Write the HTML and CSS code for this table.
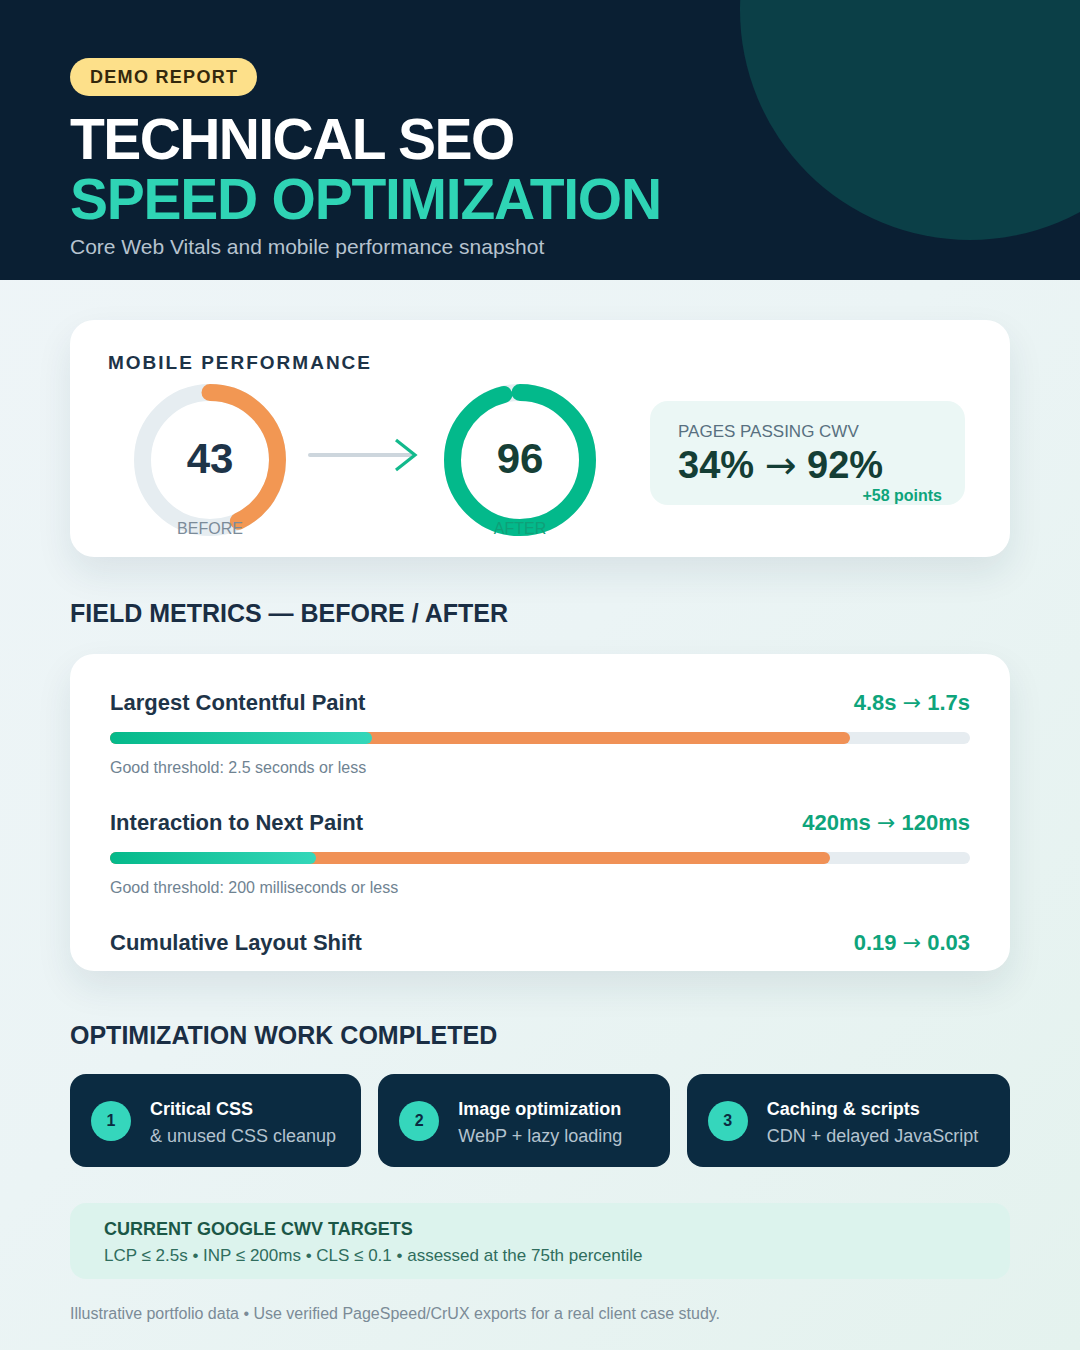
FILE: index.html
```html
<!DOCTYPE html>
<html lang="en">
<head>
<meta charset="utf-8">
<title>Technical SEO Speed Optimization</title>
<link rel="stylesheet" href="styles.css">
</head>
<body>
<div class="page">
  <header class="hero">
    <div class="hero-circle"></div>
    <span class="badge">DEMO REPORT</span>
    <h1 class="title"><span class="t-white">TECHNICAL SEO</span><span class="t-green">SPEED OPTIMIZATION</span></h1>
    <p class="subtitle">Core Web Vitals and mobile performance snapshot</p>
  </header>

  <main class="content">
    <section class="card perf">
      <h2 class="perf-heading">MOBILE PERFORMANCE</h2>
      <div class="perf-row">
        <div class="donut">
          <svg width="152" height="152" viewBox="0 0 152 152">
            <circle cx="76" cy="76" r="67.5" fill="none" stroke="#e6edf1" stroke-width="17"/>
            <circle cx="76" cy="76" r="67.5" fill="none" stroke="#f29753" stroke-width="17" stroke-linecap="round" stroke-dasharray="182.4 424.1" transform="rotate(-90 76 76)"/>
          </svg>
          <span class="donut-num before-num">43</span>
          <span class="donut-label before-label">BEFORE</span>
        </div>
        <div class="arrow">
          <svg width="110" height="40" viewBox="0 0 110 40">
            <line x1="2" y1="20" x2="104" y2="20" stroke="#cdd6dd" stroke-width="4" stroke-linecap="round"/>
            <polyline points="88,5 107,20 88,35" fill="none" stroke="#12b98c" stroke-width="3.2"/>
          </svg>
        </div>
        <div class="donut">
          <svg width="152" height="152" viewBox="0 0 152 152">
            <circle cx="76" cy="76" r="67.5" fill="none" stroke="#e6edf1" stroke-width="17"/>
            <circle cx="76" cy="76" r="67.5" fill="none" stroke="#03b98b" stroke-width="17" stroke-linecap="round" stroke-dasharray="407.1 424.1" transform="rotate(-90 76 76)"/>
          </svg>
          <span class="donut-num after-num">96</span>
          <span class="donut-label after-label">AFTER</span>
        </div>
        <div class="stat">
          <div class="stat-label">PAGES PASSING CWV</div>
          <div class="stat-value">34% <span class="arr">→</span> 92%</div>
          <div class="stat-delta">+58 points</div>
        </div>
      </div>
    </section>

    <h2 class="section-heading field-heading">FIELD METRICS — BEFORE / AFTER</h2>
    <section class="card metrics">
      <div class="metric">
        <div class="metric-head"><span class="metric-name">Largest Contentful Paint</span><span class="metric-val">4.8s <span class="arr">→</span> 1.7s</span></div>
        <div class="bar">
          <div class="bar-before" style="width:86%"></div>
          <div class="bar-after" style="width:30.5%"></div>
        </div>
        <div class="metric-note">Good threshold: 2.5 seconds or less</div>
      </div>
      <div class="metric">
        <div class="metric-head"><span class="metric-name">Interaction to Next Paint</span><span class="metric-val">420ms <span class="arr">→</span> 120ms</span></div>
        <div class="bar">
          <div class="bar-before" style="width:83.7%"></div>
          <div class="bar-after" style="width:24%"></div>
        </div>
        <div class="metric-note">Good threshold: 200 milliseconds or less</div>
      </div>
      <div class="metric">
        <div class="metric-head"><span class="metric-name">Cumulative Layout Shift</span><span class="metric-val">0.19 <span class="arr">→</span> 0.03</span></div>
      </div>
    </section>

    <h2 class="section-heading work-heading">OPTIMIZATION WORK COMPLETED</h2>
    <section class="steps">
      <div class="step">
        <span class="step-num">1</span>
        <div class="step-text"><div class="step-title">Critical CSS</div><div class="step-sub">&amp; unused CSS cleanup</div></div>
      </div>
      <div class="step">
        <span class="step-num">2</span>
        <div class="step-text"><div class="step-title">Image optimization</div><div class="step-sub">WebP + lazy loading</div></div>
      </div>
      <div class="step">
        <span class="step-num">3</span>
        <div class="step-text"><div class="step-title">Caching &amp; scripts</div><div class="step-sub">CDN + delayed JavaScript</div></div>
      </div>
    </section>

    <section class="targets">
      <div class="targets-title">CURRENT GOOGLE CWV TARGETS</div>
      <div class="targets-text">LCP ≤ 2.5s • INP ≤ 200ms • CLS ≤ 0.1 • assessed at the 75th percentile</div>
    </section>

    <p class="footnote">Illustrative portfolio data • Use verified PageSpeed/CrUX exports for a real client case study.</p>
  </main>
</div>
</body>
</html>
```
FILE: styles.css
```css
* { box-sizing: border-box; }
html, body { margin: 0; padding: 0; }
body {
  font-family: "Liberation Sans", Arial, Helvetica, sans-serif;
  background: #eef4f6;
}
.page {
  width: 1080px;
  height: 1350px;
  overflow: hidden;
  background: linear-gradient(135deg, #eff5f8 0%, #ebf4f5 50%, #e4f2ee 100%);
}
.arr {
  font-family: "DejaVu Sans", sans-serif;
  font-weight: 400;
}

/* HERO */
.hero {
  position: relative;
  overflow: hidden;
  background: #0a1f33;
  padding: 58px 70px 21px;
}
.hero-circle {
  position: absolute;
  left: 740px;
  top: -220px;
  width: 460px;
  height: 460px;
  border-radius: 50%;
  background: #0b3f47;
}
.badge {
  position: relative;
  display: inline-block;
  background: #fde08a;
  color: #33280c;
  font-size: 18px;
  font-weight: 700;
  letter-spacing: 1.3px;
  line-height: 20px;
  padding: 9px 19px 9px 20px;
  border-radius: 19px;
}
.title {
  position: relative;
  margin: 13px 0 0;
  font-size: 57px;
  line-height: 60px;
  font-weight: 700;
}
.title span { display: block; }
.t-white { color: #ffffff; letter-spacing: -1.6px; }
.t-green { color: #2fd4b5; letter-spacing: -1.25px; }
.subtitle {
  position: relative;
  margin: 6px 0 0;
  font-size: 21px;
  line-height: 24px;
  color: #b6c3cf;
}

/* CONTENT */
.content {
  padding: 40px 70px 0;
}
.card {
  background: #ffffff;
  border-radius: 24px;
  box-shadow: 0 16px 36px rgba(20, 60, 80, 0.09);
}

.perf {
  height: 237px;
  padding: 31px 38px 21px;
}
.perf-heading {
  margin: 0;
  font-size: 19px;
  line-height: 24px;
  font-weight: 700;
  letter-spacing: 2px;
  color: #1d3347;
}
.perf-row {
  display: flex;
  align-items: center;
  margin-top: 9px;
}
.donut {
  position: relative;
  width: 204px;
  height: 152px;
  display: flex;
  justify-content: center;
}
.donut-num {
  position: absolute;
  left: 0;
  right: 0;
  top: 52px;
  text-align: center;
  font-size: 42px;
  line-height: 46px;
  font-weight: 700;
}
.before-num { color: #1e3448; }
.after-num { color: #163f36; }
.donut-label {
  position: absolute;
  left: 0;
  right: 0;
  top: 136px;
  text-align: center;
  font-size: 16px;
  line-height: 18px;
}
.before-label { color: #7b8b99; }
.after-label { color: #0f9f78; }
.arrow {
  width: 110px;
  height: 40px;
  margin-left: -4px;
  margin-bottom: 10px;
}
.arrow svg { display: block; }
.stat {
  width: 315px;
  margin-left: 28px;
  margin-bottom: 14px;
  background: #ebf7f5;
  border-radius: 18px;
  padding: 22px 23px 0 28px;
  height: 104px;
}
.stat-label {
  font-size: 17px;
  line-height: 18px;
  color: #587080;
}
.stat-value {
  margin-top: 2px;
  font-size: 38px;
  line-height: 44px;
  font-weight: 700;
  color: #143e35;
}
.stat-delta {
  text-align: right;
  font-size: 16px;
  line-height: 18px;
  font-weight: 700;
  color: #0ea47b;
}

.section-heading {
  margin: 0;
  font-size: 25px;
  line-height: 30px;
  font-weight: 700;
  color: #1a2e44;
}
.field-heading { margin: 41px 0 26px; }
.work-heading { margin: 49px 0 24px; }

/* METRICS */
.metrics {
  height: 317px;
  padding: 37px 40px 14px;
}
.metric + .metric { margin-top: 34px; }
.metric-head {
  display: flex;
  justify-content: space-between;
  align-items: baseline;
  font-size: 22px;
  line-height: 24px;
  font-weight: 700;
}
.metric-name { color: #1e3448; }
.metric-val { color: #0ea47b; }
.bar {
  position: relative;
  margin-top: 17px;
  height: 12px;
  border-radius: 6px;
  background: #e6ecf0;
}
.bar-before, .bar-after {
  position: absolute;
  left: 0;
  top: 0;
  height: 12px;
  border-radius: 6px;
}
.bar-before { background: #f09156; }
.bar-after { background: linear-gradient(90deg, #05b98a 0%, #34d7ba 100%); }
.metric-note {
  margin-top: 15px;
  font-size: 16px;
  line-height: 18px;
  color: #6f8392;
}

/* STEPS */
.steps {
  display: grid;
  grid-template-columns: 291fr 291fr 323fr;
  gap: 17px;
}
.step {
  height: 93px;
  background: #0b2b41;
  border-radius: 16px;
  padding: 4px 16px 0 21px;
  display: flex;
  align-items: center;
  gap: 19px;
}
.step-num {
  flex: none;
  width: 40px;
  height: 40px;
  margin-top: -4px;
  border-radius: 50%;
  background: #35d6bc;
  color: #0b2b41;
  font-size: 16px;
  font-weight: 700;
  display: flex;
  align-items: center;
  justify-content: center;
}
.step-title {
  font-size: 18px;
  line-height: 22px;
  font-weight: 700;
  color: #ffffff;
}
.step-sub {
  margin-top: 5px;
  font-size: 18px;
  line-height: 22px;
  color: #b4c3cf;
}

/* TARGETS */
.targets {
  margin-top: 36px;
  height: 76px;
  background: #dcf3ed;
  border-radius: 16px;
  padding: 15px 34px 0;
}
.targets-title {
  font-size: 18px;
  line-height: 22px;
  font-weight: 700;
  color: #1b5747;
}
.targets-text {
  margin-top: 6px;
  font-size: 17px;
  line-height: 20px;
  color: #2f6d5d;
}
.footnote {
  margin: 26px 0 0;
  font-size: 16px;
  line-height: 18px;
  color: #7b8b97;
}
```
